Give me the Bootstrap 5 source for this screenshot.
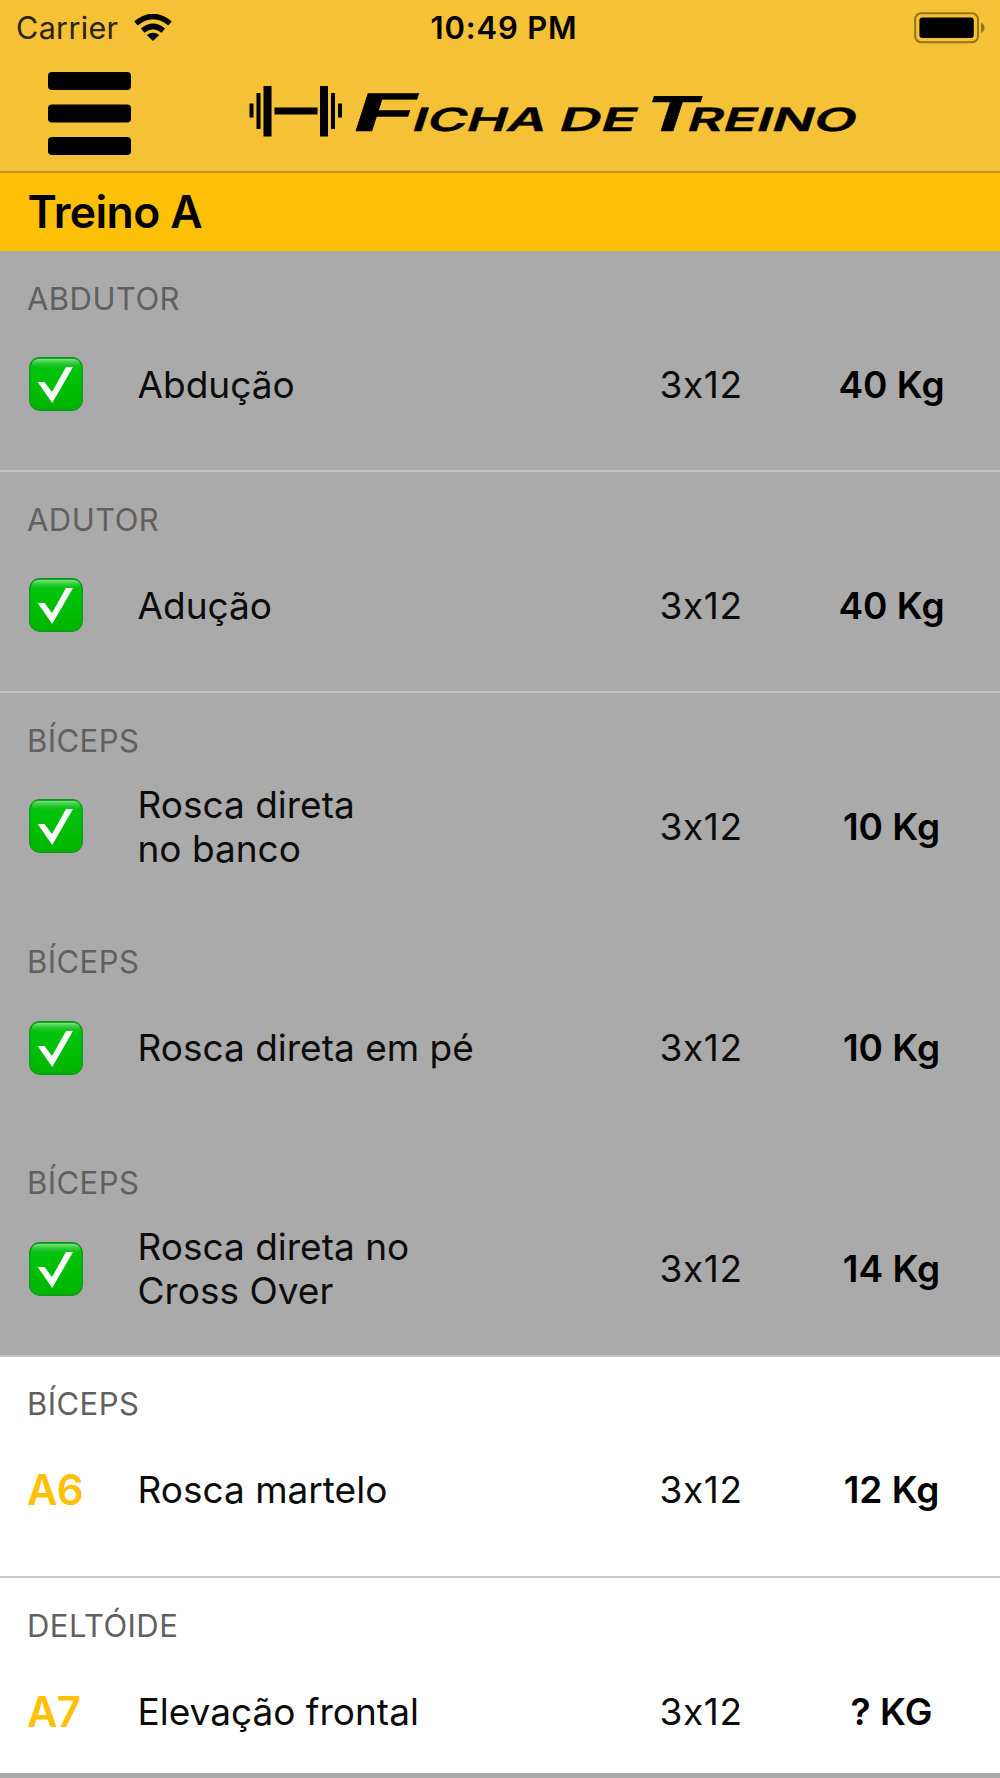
<!DOCTYPE html>
<html lang="pt-BR">
<head>
<meta charset="utf-8">
<meta name="viewport" content="width=device-width, initial-scale=1">
<title>Ficha de Treino</title>
<link href="https://cdn.jsdelivr.net/npm/bootstrap@5.3.0/dist/css/bootstrap.min.css" rel="stylesheet">
<style>
body{font-family:Inter,"Liberation Sans",sans-serif;font-feature-settings:"calt" 0;background:#aaa;color:#0c0c0c;width:1000px;height:1778px;overflow:hidden}
.app-header{background:#f5c137;height:172.5px;border-bottom:2px solid #c0971d}
.status-bar{height:55px;padding:0 14px 0 16px;font-size:30.5px;line-height:55px;color:#111}
.status-side{width:300px}
.carrier-name{letter-spacing:.35px;color:#2b2410}
.clock-text{font-weight:600;font-size:31px;letter-spacing:.85px;color:#000;padding-left:6px}
.brand-bar{height:115px;padding-left:48px}
.menu-btn{width:83px;height:83px;margin-top:1px}
.brand-logo{margin-left:117px;margin-bottom:1px;overflow:visible}
.brand-logo text{font-family:Inter,sans-serif}
.workout-title{background:#ffc107;height:78.5px;padding-left:27.5px;font-size:44.5px;letter-spacing:-.6px;font-weight:600;line-height:78px;color:#000}
.exercise{height:221.2px;padding:29.5px 0 0 27px;border-bottom:2px solid transparent}
.exercise.ruled{border-bottom-color:#c3c3c8}
.exercise.todo{background:#fff}
.exercise.todo.ruled{border-bottom-color:#c8c7cc}
.exercise.cut{height:194.5px;border:0}
.group-name{font-size:31px;line-height:36px;letter-spacing:.45px;color:#606060}
.exercise-line{height:88px;margin-top:24px;font-size:37px;line-height:44px}
.exercise-mark{width:110.5px;font-size:42px;letter-spacing:-.8px;font-weight:600;color:#ffc107}
.exercise-name{width:522px}
.exercise-sets{width:132px;letter-spacing:.6px}
.exercise-load{width:200px;font-weight:600;color:#000}
.done-icon{width:54px;height:54px;margin-left:2px;margin-bottom:1px}
</style>
</head>
<body>
<svg width="0" height="0" class="position-absolute" aria-hidden="true">
<defs>
<linearGradient id="greenFill" x1="0" y1="0" x2="0" y2="1"><stop offset="0" stop-color="#12b51c"/><stop offset=".25" stop-color="#00c40a"/><stop offset="1" stop-color="#00b400"/></linearGradient>
<linearGradient id="shine" x1="0" y1="0" x2="0" y2="1"><stop offset="0" stop-color="#7be381"/><stop offset="1" stop-color="#12c51c" stop-opacity="0"/></linearGradient>
<symbol id="done" viewBox="0 0 54 54"><rect x=".7" y=".7" width="52.6" height="52.6" rx="10" fill="url(#greenFill)" stroke="#109418" stroke-width="1.2"/><rect x="3" y="2" width="48" height="10" rx="7" fill="url(#shine)"/><path d="M8.700 25H15.500L23 35L37 10H44L23.200 46Z" fill="#fff"/></symbol>
</defs>
</svg>

<header class="app-header">
  <div class="status-bar d-flex justify-content-between align-items-center">
    <div class="status-side d-flex align-items-center">
      <span class="carrier-name">Carrier</span>
      <svg class="ms-3" width="38" height="27" viewBox="0 0 38 27" fill="none" stroke="#000" stroke-width="5.500"><path d="M2 9.500Q19-4.500 36 9.500"/><path d="M8.700 16.700Q19 8 29.300 16.700"/><path d="M12.800 21Q19 16.500 25.200 21L19 27Z" fill="#000" stroke="none"/></svg>
    </div>
    <span class="clock-text">10:49 PM</span>
    <div class="status-side d-flex justify-content-end">
      <svg width="72" height="32" viewBox="0 0 72 32"><rect x="1.200" y="1.200" width="62.800" height="29" rx="6" fill="none" stroke="#957420" stroke-width="2"/><rect x="5.400" y="5.600" width="54.400" height="20.400" rx="3" fill="#000"/><path d="M67 10.500Q70.500 12 70.500 15.700T67 21Z" fill="#957420"/></svg>
    </div>
  </div>
  <div class="brand-bar d-flex align-items-center">
    <button class="btn p-0 border-0 menu-btn d-flex" aria-label="Menu"><svg width="83" height="83" viewBox="0 0 83 83"><rect width="83" height="18" rx="4"/><rect y="32.500" width="83" height="18" rx="4"/><rect y="65" width="83" height="18" rx="4"/></svg></button>
    <svg class="brand-logo" width="620" height="60" viewBox="248 82 620 60">
      <path d="M249.500 103.500h4v14h-4zM256.500 93h4v36h-4zM263.500 86h8v50.500h-8zM274.500 107.500h43v7h-43zM320 86h8v50.500h-8zM331 93h4v36h-4zM338 103.500h4v14h-4z"/>
      <g font-size="32" font-weight="600" stroke="#000" stroke-width=".4">
        <text transform="translate(349 131) skewX(-18)" font-size="52" font-weight="700" textLength="62" lengthAdjust="spacingAndGlyphs">F</text>
        <text transform="translate(410 131) skewX(-18)" textLength="134" lengthAdjust="spacingAndGlyphs">ICHA</text>
        <text transform="translate(557 131) skewX(-18)" textLength="77" lengthAdjust="spacingAndGlyphs">DE</text>
        <text transform="translate(640 131) skewX(-18)" font-size="48" font-weight="700" textLength="54" lengthAdjust="spacingAndGlyphs">T</text>
        <text transform="translate(685 131) skewX(-18)" textLength="169" lengthAdjust="spacingAndGlyphs">REINO</text>
      </g>
    </svg>
  </div>
</header>
<h1 class="workout-title m-0">Treino A</h1>

<main>
  <section class="exercise ruled"><div class="group-name">ABDUTOR</div><div class="exercise-line d-flex align-items-center"><div class="exercise-mark d-flex"><svg class="done-icon"><use href="#done"/></svg></div><div class="exercise-name">Abdução</div><div class="exercise-sets">3x12</div><div class="exercise-load text-center">40 Kg</div></div></section>
  <section class="exercise ruled"><div class="group-name">ADUTOR</div><div class="exercise-line d-flex align-items-center"><div class="exercise-mark d-flex"><svg class="done-icon"><use href="#done"/></svg></div><div class="exercise-name">Adução</div><div class="exercise-sets">3x12</div><div class="exercise-load text-center">40 Kg</div></div></section>
  <section class="exercise"><div class="group-name">BÍCEPS</div><div class="exercise-line d-flex align-items-center"><div class="exercise-mark d-flex"><svg class="done-icon"><use href="#done"/></svg></div><div class="exercise-name">Rosca direta<br>no banco</div><div class="exercise-sets">3x12</div><div class="exercise-load text-center">10 Kg</div></div></section>
  <section class="exercise"><div class="group-name">BÍCEPS</div><div class="exercise-line d-flex align-items-center"><div class="exercise-mark d-flex"><svg class="done-icon"><use href="#done"/></svg></div><div class="exercise-name">Rosca direta em pé</div><div class="exercise-sets">3x12</div><div class="exercise-load text-center">10 Kg</div></div></section>
  <section class="exercise ruled"><div class="group-name">BÍCEPS</div><div class="exercise-line d-flex align-items-center"><div class="exercise-mark d-flex"><svg class="done-icon"><use href="#done"/></svg></div><div class="exercise-name">Rosca direta no<br>Cross Over</div><div class="exercise-sets">3x12</div><div class="exercise-load text-center">14 Kg</div></div></section>
  <section class="exercise todo ruled"><div class="group-name">BÍCEPS</div><div class="exercise-line d-flex align-items-center"><div class="exercise-mark">A6</div><div class="exercise-name">Rosca martelo</div><div class="exercise-sets">3x12</div><div class="exercise-load text-center">12 Kg</div></div></section>
  <section class="exercise todo cut"><div class="group-name">DELTÓIDE</div><div class="exercise-line d-flex align-items-center"><div class="exercise-mark">A7</div><div class="exercise-name">Elevação frontal</div><div class="exercise-sets">3x12</div><div class="exercise-load text-center">? KG</div></div></section>
</main>
<script src="https://cdn.jsdelivr.net/npm/bootstrap@5.3.0/dist/js/bootstrap.bundle.min.js"></script>
</body>
</html>
